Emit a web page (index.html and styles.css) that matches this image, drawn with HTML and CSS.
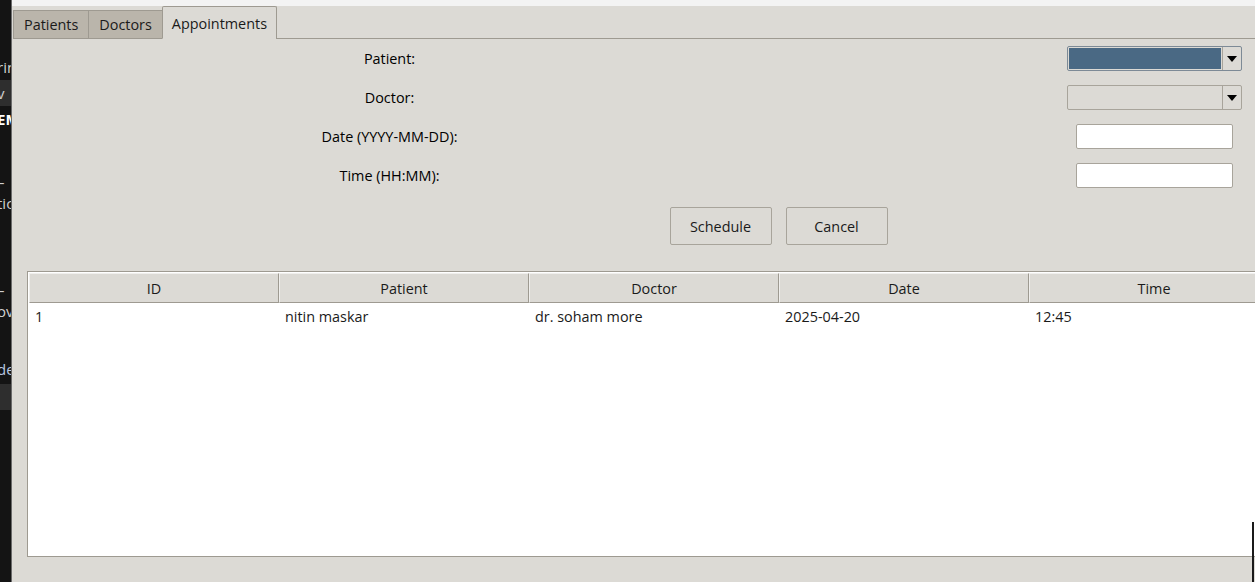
FILE: index.html
```html
<!DOCTYPE html>
<html>
<head>
<meta charset="utf-8">
<link rel="stylesheet" href="styles.css">
</head>
<body>
<div class="app">
  <div class="strip">
    <div class="s-gap g1"></div>
    <div class="s-item">rin</div>
    <div class="s-item s-hl">v</div>
    <div class="s-item s-bold">EM</div>
    <div class="s-gap g2"></div>
    <div class="s-item s-dash">–</div>
    <div class="s-item">tic</div>
    <div class="s-gap g3"></div>
    <div class="s-item s-dash">–</div>
    <div class="s-item">ov</div>
    <div class="s-gap g4"></div>
    <div class="s-item s-blue">de</div>
    <div class="s-gap g5"></div>
    <div class="s-item s-hl"></div>
  </div>
  <div class="main">
    <div class="topbar"></div>
    <div class="tabs">
      <div class="tab">Patients</div>
      <div class="tab">Doctors</div>
      <div class="tab active">Appointments</div>
      <div class="tab-fill"></div>
    </div>
    <div class="pane">
      <div class="form">
        <div class="lbl">Patient:</div>
        <div class="combo focus"><div class="combo-field"></div><div class="combo-btn"><span class="arrow"></span></div></div>
        <div class="lbl">Doctor:</div>
        <div class="combo"><div class="combo-field"></div><div class="combo-btn"><span class="arrow"></span></div></div>
        <div class="lbl">Date (YYYY-MM-DD):</div>
        <div class="entry"></div>
        <div class="lbl">Time (HH:MM):</div>
        <div class="entry"></div>
      </div>
      <div class="buttons">
        <div class="btn">Schedule</div>
        <div class="btn">Cancel</div>
      </div>
      <div class="tree">
        <div class="thead">
          <div class="th">ID</div>
          <div class="th">Patient</div>
          <div class="th">Doctor</div>
          <div class="th">Date</div>
          <div class="th">Time</div>
        </div>
        <div class="tbody">
          <div class="tr">
            <div class="td">1</div>
            <div class="td">nitin maskar</div>
            <div class="td">dr. soham more</div>
            <div class="td">2025-04-20</div>
            <div class="td">12:45</div>
          </div>
        </div>
      </div>
    </div>
  </div>
  <div class="edge"></div>
</div>
</body>
</html>
```

FILE: styles.css
```css
html, body {
  margin: 0;
  padding: 0;
  width: 1255px;
  height: 582px;
  overflow: hidden;
  font-family: "Open Sans", "Noto Sans", sans-serif;
  font-size: 14.4px;
  color: #000;
}
.app {
  display: flex;
  width: 1255px;
  height: 582px;
  position: relative;
  overflow: hidden;
}
.strip {
  width: 11px;
  flex: none;
  background: #141414;
  border-right: 1px solid #6a6a6a;
  display: flex;
  flex-direction: column;
  overflow: hidden;
  color: #cfcfcf;
  font-family: "Open Sans", sans-serif;
  font-size: 15px;
}
.s-gap { flex: none; }
.g1 { height: 54px; }
.g2 { height: 42px; }
.g3 { height: 66px; }
.g4 { height: 32px; }
.g5 { height: 2px; }
.s-item {
  height: 26px;
  line-height: 26px;
  white-space: nowrap;
  overflow: hidden;
  margin-left: -3px;
  flex: none;
}
.s-dash { height: 16px; line-height: 16px; }
.s-hl { background: #2e2e2e; }
.s-bold { font-weight: 700; color: #fff; }
.s-blue { color: #b8c8e0; }
.main {
  flex: 1;
  display: flex;
  flex-direction: column;
  background: #dcdad5;
  min-width: 0;
}
.topbar {
  height: 6px;
  background: #f3f3f3;
  flex: none;
}
.tabs {
  display: flex;
  align-items: flex-end;
  height: 33px;
  flex: none;
}
.tab {
  height: 29px;
  line-height: 28px;
  padding: 0 10px;
  background: #bab5ab;
  border: 1px solid #9e9a91;
  margin-right: -1px;
  box-sizing: border-box;
  color: #1a1a1a;
}
.tab:first-child { margin-left: 1px; }
.tab.active {
  background: #dcdad5;
  height: 33px;
  line-height: 34px;
  border-bottom-color: #dcdad5;
  padding: 0 9px;
  border-radius: 2px 2px 0 0;
}
.tab-fill {
  flex: 1;
  border-bottom: 1px solid #9e9a91;
  height: 0;
}
.pane {
  flex: 1;
  display: flex;
  flex-direction: column;
}
.form {
  display: grid;
  grid-template-columns: 755px 775px;
  grid-auto-rows: 39px;
  align-items: center;
}
.lbl {
  justify-self: center;
  text-align: center;
}
.combo {
  justify-self: center;
  width: 175px;
  height: 25px;
  box-sizing: border-box;
  border: 1px solid #a8a49b;
  border-radius: 2px;
  display: flex;
  background: #dcdad5;
}
.combo.focus { border-color: #7d8a96; }
.combo-field {
  flex: 1;
  margin: 1px;
}
.combo.focus .combo-field { background: #4a6984; }
.combo-btn {
  width: 18px;
  border-left: 1px solid #a8a49b;
  display: flex;
  align-items: center;
  justify-content: center;
}
.arrow {
  width: 0;
  height: 0;
  border-left: 5px solid transparent;
  border-right: 5px solid transparent;
  border-top: 6px solid #000;
}
.entry {
  justify-self: center;
  width: 157px;
  height: 25px;
  box-sizing: border-box;
  background: #fff;
  border: 1px solid #a8a49b;
  border-radius: 2px;
}
.buttons {
  display: flex;
  justify-content: center;
  gap: 14px;
  padding-top: 12px;
  width: 1533px;
}
.btn {
  width: 102px;
  height: 38px;
  box-sizing: border-box;
  border: 1px solid #a8a49b;
  border-radius: 2px;
  background: #dcdad5;
  display: flex;
  align-items: center;
  justify-content: center;
  color: #1a1a1a;
}
.tree {
  margin: 26px 0 0 15px;
  width: 1300px;
  height: 286px;
  box-sizing: border-box;
  border: 1px solid #9e9a91;
  background: #fff;
  display: flex;
  flex-direction: column;
  padding: 1px 0 0 1px;
  flex: none;
}
.thead {
  display: flex;
  flex: none;
  background: #dcdad5;
}
.th {
  width: 250px;
  height: 30px;
  box-sizing: border-box;
  border: 1px solid #9e9a91;
  border-top-color: #f0efed;
  border-left-color: #f0efed;
  display: flex;
  align-items: center;
  justify-content: center;
  flex: none;
  color: #1a1a1a;
}
.tbody { flex: 1; }
.tr {
  display: flex;
  height: 27px;
  align-items: center;
}
.td {
  width: 250px;
  flex: none;
  box-sizing: border-box;
  padding-left: 6px;
  color: #1a1a1a;
}
.edge {
  position: absolute;
  right: 1px;
  top: 522px;
  width: 2px;
  height: 60px;
  background: #1a1a1a;
}
```
